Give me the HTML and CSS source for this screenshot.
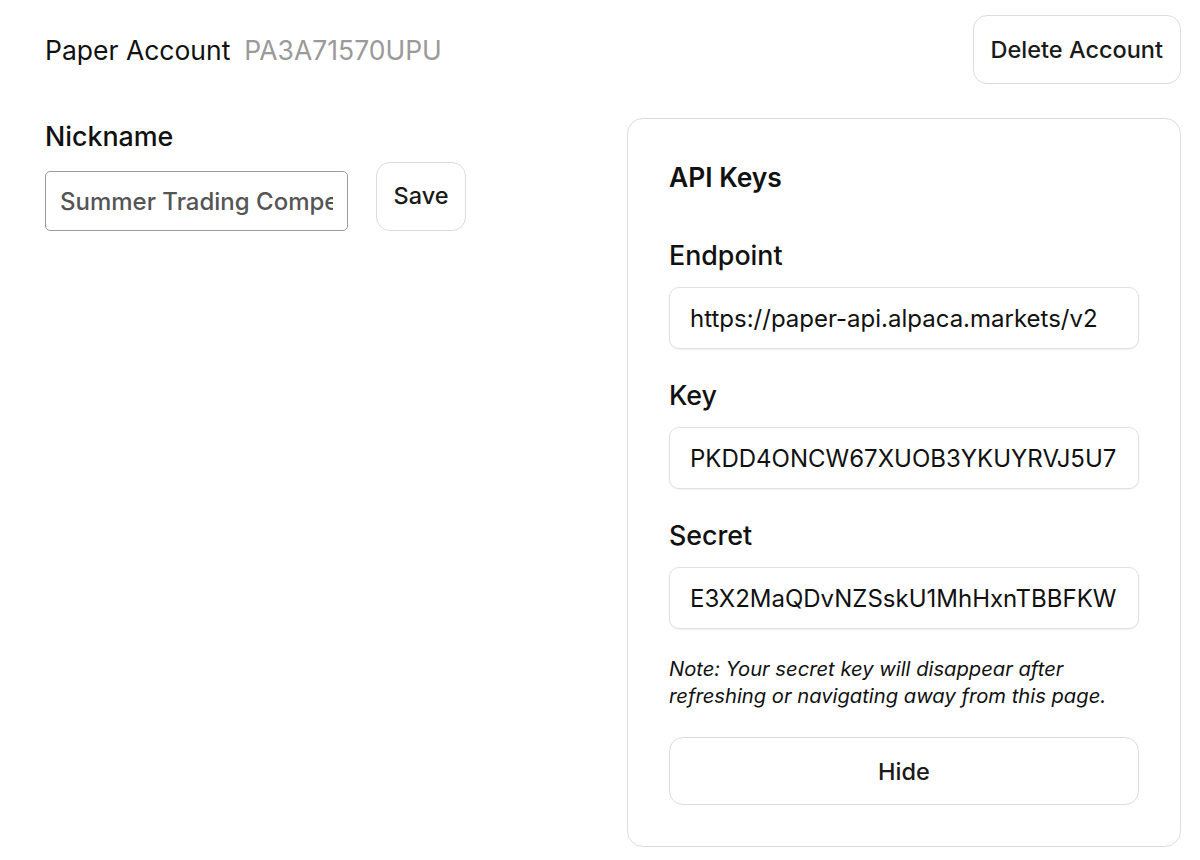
FILE: index.html
```html
<!DOCTYPE html>
<html>
<head>
<meta charset="utf-8">
<link rel="stylesheet" href="styles.css">
</head>
<body>
<div class="page">
  <header class="topbar">
    <div class="title"><span class="title-main">Paper Account</span><span class="title-id">PA3A71570UPU</span></div>
    <button class="btn btn-delete">Delete Account</button>
  </header>
  <div class="columns">
    <section class="left">
      <label class="label" for="nick">Nickname</label>
      <div class="nick-row">
        <input id="nick" class="nick-input" type="text" value="Summer Trading Competition">
        <button class="btn btn-save">Save</button>
      </div>
    </section>
    <section class="card">
      <h2 class="card-title">API Keys</h2>
      <div class="field field-first">
        <div class="label">Endpoint</div>
        <input class="key-box" type="text" readonly value="https://paper-api.alpaca.markets/v2">
      </div>
      <div class="field">
        <div class="label">Key</div>
        <input class="key-box" type="text" readonly value="PKDD4ONCW67XUOB3YKUYRVJ5U7">
      </div>
      <div class="field">
        <div class="label">Secret</div>
        <input class="key-box" type="text" readonly value="E3X2MaQDvNZSskU1MhHxnTBBFKWNwq8Lr5pZ7dYt">
      </div>
      <p class="note">Note: Your secret key will disappear after refreshing or navigating away from this page.</p>
      <button class="btn btn-hide">Hide</button>
    </section>
  </div>
</div>
</body>
</html>
```
FILE: styles.css
```css
* { box-sizing: border-box; }
html, body { margin: 0; padding: 0; background: #fff; }
body { font-family: Inter, "Noto Sans", sans-serif; color: #111; }
.page { padding: 15px 19px 0 45px; }
.topbar { display: flex; justify-content: space-between; align-items: center; }
.title { font-size: 26.5px; line-height: 36px; }
.title-main { color: #111; }
.title-id { color: #9a9a9a; margin-left: 14px; }
.btn {
  font-family: Inter, "Noto Sans", sans-serif;
  background: #fff;
  border: 1px solid #dcdcdc;
  border-radius: 14px;
  color: #1a1a1a;
  font-weight: 500;
  font-size: 23.5px;
  cursor: pointer;
}
.btn-delete { height: 69px; padding: 0 17px; }
.columns { display: flex; justify-content: space-between; align-items: flex-start; margin-top: 34px; }
.left { display: flex; flex-direction: column; }
.label { display: block; font-size: 26.8px; line-height: 36px; font-weight: 500; color: #111; }
.nick-row { display: flex; align-items: flex-end; gap: 28px; margin-top: 8px; }
.nick-input {
  width: 303px; height: 60px;
  border: 1px solid #9c9c9c; border-radius: 5px;
  padding: 0 14px;
  font-family: Inter, "Noto Sans", sans-serif;
  font-size: 24px; font-weight: 500; color: #555;
  outline: none;
}
.btn-save { width: 90px; height: 69px; padding: 0 0 2px; }
.card {
  width: 554px;
  border: 1px solid #dcdcdc;
  border-radius: 16px;
  padding: 40px 41px 41px;
}
.card-title { margin: 0; font-size: 26.4px; line-height: 36px; font-weight: 600; }
.field { margin-top: 28px; }
.field-first { margin-top: 42px; }
.key-box {
  display: block;
  width: 100%;
  margin-top: 14px;
  height: 62px;
  border: 1px solid #e1e1e1;
  border-radius: 10px;
  box-shadow: 0 1px 2px rgba(0,0,0,0.06);
  padding: 0 20px;
  font-family: Inter, "Noto Sans", sans-serif;
  font-size: 24px; color: #111;
  background: #fff;
  outline: none;
}
.note { margin: 26px 0 0; font-size: 20.2px; line-height: 27px; font-style: italic; color: #111; }
.btn-hide { display: block; width: 100%; height: 68px; margin-top: 28px; }
```
